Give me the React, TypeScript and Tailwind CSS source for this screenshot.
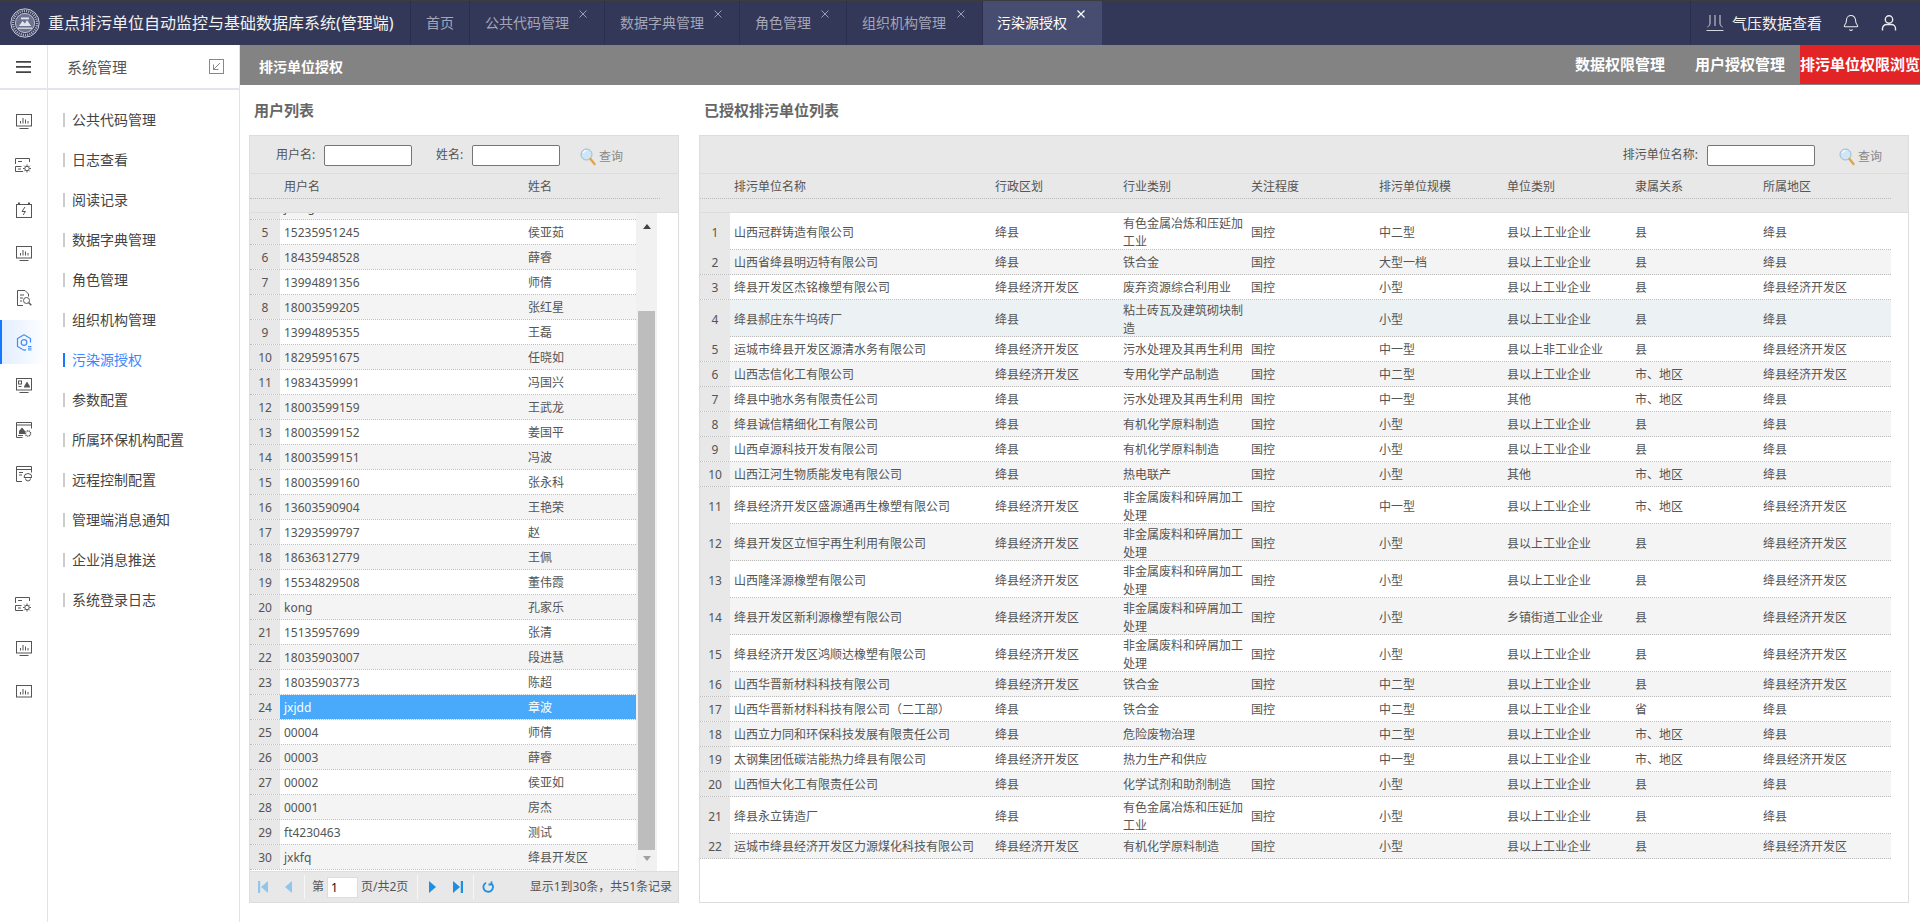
import { Bell } from 'lucide-react'

const FONT = "font-['Noto_Sans','Noto_Sans_CJK_SC',sans-serif]"

const TABS = [
  { label: '首页', width: 'w-[59px]', closable: false, active: false },
  { label: '公共代码管理', width: 'w-[135px]', closable: true, active: false },
  { label: '数据字典管理', width: 'w-[135px]', closable: true, active: false },
  { label: '角色管理', width: 'w-[107px]', closable: true, active: false },
  { label: '组织机构管理', width: 'w-[136px]', closable: true, active: false },
  { label: '污染源授权', width: 'w-[119px]', closable: true, active: true },
]

const MENU = [
  '公共代码管理',
  '日志查看',
  '阅读记录',
  '数据字典管理',
  '角色管理',
  '组织机构管理',
  '污染源授权',
  '参数配置',
  '所属环保机构配置',
  '远程控制配置',
  '管理端消息通知',
  '企业消息推送',
  '系统登录日志',
]

const USERS = [
  [4, 'jxang', ''],
  [5, '15235951245', '侯亚茹'],
  [6, '18435948528', '薛睿'],
  [7, '13994891356', '师倩'],
  [8, '18003599205', '张红星'],
  [9, '13994895355', '王磊'],
  [10, '18295951675', '任晓如'],
  [11, '19834359991', '冯国兴'],
  [12, '18003599159', '王武龙'],
  [13, '18003599152', '姜国平'],
  [14, '18003599151', '冯波'],
  [15, '18003599160', '张永科'],
  [16, '13603590904', '王艳荣'],
  [17, '13293599797', '赵'],
  [18, '18636312779', '王佩'],
  [19, '15534829508', '董伟霞'],
  [20, 'kong', '孔家乐'],
  [21, '15135957699', '张清'],
  [22, '18035903007', '段进慧'],
  [23, '18035903773', '陈超'],
  [24, 'jxjdd', '章波'],
  [25, '00004', '师倩'],
  [26, '00003', '薛睿'],
  [27, '00002', '侯亚如'],
  [28, '00001', '房杰'],
  [29, 'ft4230463', '测试'],
  [30, 'jxkfq', '绛县开发区'],
] as const

const KF = '绛县经济开发区'
const GY = '县以上工业企业'
const YS = '有色金属冶炼和压延加工业'
const FL = '非金属废料和碎屑加工处理'
const SD = '市、地区'

const COMPANIES = [
  ['山西冠群铸造有限公司', '绛县', YS, '国控', '中二型', GY, '县', '绛县'],
  ['山西省绛县明迈特有限公司', '绛县', '铁合金', '国控', '大型一档', GY, '县', '绛县'],
  ['绛县开发区杰铭橡塑有限公司', KF, '废弃资源综合利用业', '国控', '小型', GY, '县', KF],
  ['绛县郝庄东牛坞砖厂', '绛县', '粘土砖瓦及建筑砌块制造', '', '小型', GY, '县', '绛县'],
  ['运城市绛县开发区源清水务有限公司', KF, '污水处理及其再生利用', '国控', '中一型', '县以上非工业企业', '县', KF],
  ['山西志信化工有限公司', KF, '专用化学产品制造', '国控', '中二型', GY, SD, KF],
  ['绛县中驰水务有限责任公司', '绛县', '污水处理及其再生利用', '国控', '中一型', '其他', SD, '绛县'],
  ['绛县诚信精细化工有限公司', '绛县', '有机化学原料制造', '国控', '小型', GY, '县', '绛县'],
  ['山西卓源科技开发有限公司', '绛县', '有机化学原料制造', '国控', '小型', GY, '县', '绛县'],
  ['山西江河生物质能发电有限公司', '绛县', '热电联产', '国控', '小型', '其他', SD, '绛县'],
  ['绛县经济开发区盛源通再生橡塑有限公司', KF, FL, '国控', '中一型', GY, SD, KF],
  ['绛县开发区立恒宇再生利用有限公司', KF, FL, '国控', '小型', GY, '县', KF],
  ['山西隆泽源橡塑有限公司', KF, FL, '国控', '小型', GY, '县', KF],
  ['绛县开发区新利源橡塑有限公司', KF, FL, '国控', '小型', '乡镇街道工业企业', '县', KF],
  ['绛县经济开发区鸿顺达橡塑有限公司', KF, FL, '国控', '小型', GY, '县', KF],
  ['山西华晋新材料科技有限公司', KF, '铁合金', '国控', '中二型', GY, '县', KF],
  ['山西华晋新材料科技有限公司\uFF08二工部\uFF09', '绛县', '铁合金', '国控', '中二型', GY, '省', '绛县'],
  ['山西立力同和环保科技发展有限责任公司', '绛县', '危险废物治理', '', '中二型', GY, SD, '绛县'],
  ['太钢集团低碳洁能热力绛县有限公司', KF, '热力生产和供应', '', '中一型', GY, SD, KF],
  ['山西恒大化工有限责任公司', '绛县', '化学试剂和助剂制造', '国控', '小型', GY, '县', '绛县'],
  ['绛县永立铸造厂', '绛县', YS, '国控', '小型', GY, '县', '绛县'],
  ['运城市绛县经济开发区力源煤化科技有限公司', KF, '有机化学原料制造', '国控', '小型', GY, '县', KF],
]

const COMPANY_HEADERS = ['排污单位名称', '行政区划', '行业类别', '关注程度', '排污单位规模', '单位类别', '隶属关系', '所属地区']

function Logo() {
  return (
    <svg width="30" height="30" viewBox="0 0 30 30" fill="none" className="shrink-0">
      <circle cx="15" cy="15" r="14.2" stroke="#c9ccd8" strokeWidth="1" />
      <circle cx="15" cy="15" r="12" stroke="#a9adc0" strokeWidth="2.4" strokeDasharray="1.2 1" />
      <circle cx="15" cy="15" r="9.6" fill="#6d7290" stroke="#dcdee6" strokeWidth="0.8" />
      <path d="M9 18l3.500-5 2.500 2.500 2-3.500 4 6z" fill="#e2e4ec" />
      <path d="M11 9.500h8v1.800h-8z" fill="#e6e7ee" />
      <path d="M8 19.500h14v1.500H8z" fill="#c9ccd8" />
    </svg>
  )
}

function CloseX({ active }: { active: boolean }) {
  return (
    <svg width="8" height="8" viewBox="0 0 8 8" fill="none" stroke={active ? '#ffffff' : '#9a9eb4'} strokeWidth={active ? 1.2 : 1}>
      <path d="M.5.5l7 7M7.5.5l-7 7" />
    </svg>
  )
}

function MonitorBars({ stand = true }: { stand?: boolean }) {
  return (
    <svg width="16" height="16" viewBox="0 0 16 16" fill="none" stroke="#555" strokeWidth="1">
      <rect x="0.5" y="0.5" width="15" height="11.5" />
      <path d="M4.500 9.500V7M7 9.500V4M9.500 9.500V5.500M12 9.500V7" />
      {stand && <path d="M3.500 14.500h9" />}
    </svg>
  )
}

function PanelGear() {
  return (
    <svg width="17" height="16" viewBox="0 0 17 16" fill="none" stroke="#555" strokeWidth="1">
      <path d="M8 13.500H.5v-5h6M.5 6V.5h14V4" />
      <path d="M3 3.500h4M3 11h3" />
      <circle cx="12" cy="10.500" r="2.200" />
      <path d="M12 6.500v1.600M12 12.900v1.600M8 10.500h1.600M14.400 10.500H16M9.200 7.700l1.100 1.100M13.700 12.200l1.100 1.100M9.200 13.300l1.100-1.100M13.700 8.800l1.100-1.100" />
    </svg>
  )
}

function BatteryBolt() {
  return (
    <svg width="16" height="16" viewBox="0 0 16 16" fill="none" stroke="#555" strokeWidth="1">
      <rect x="0.5" y="2.5" width="15" height="13" />
      <path d="M3 .5v2M13 .5v2" strokeWidth="2" />
      <path d="M9 5L6 9.500h3.500L7 13" />
    </svg>
  )
}

function DocSearch() {
  return (
    <svg width="16" height="16" viewBox="0 0 16 16" fill="none" stroke="#555" strokeWidth="1">
      <path d="M7 15.500H1.500V.5H9l3.500 3.500v2.500" />
      <path d="M4 5h4M4 8h3M4 11h2" />
      <circle cx="10.500" cy="10.500" r="3" />
      <path d="M12.800 12.800l2.500 2.500" strokeWidth="1.400" />
    </svg>
  )
}

function HexActive() {
  return (
    <svg width="16" height="17" viewBox="0 0 16 17" fill="none" stroke="#3b8cff" strokeWidth="1.200">
      <path d="M8 .8l6.500 3.700v4M10 15.900l-2 .3-6.500-3.700V4.500L8 .8" />
      <circle cx="8" cy="8.500" r="2.800" />
      <path d="M12 12.500h3.500M12 14.200h3.500M12 15.900h3.500" strokeWidth="1" />
    </svg>
  )
}

function MonitorHome() {
  return (
    <svg width="16" height="16" viewBox="0 0 16 16" fill="none" stroke="#555" strokeWidth="1">
      <rect x="0.5" y="0.5" width="15" height="11.5" />
      <rect x="2.5" y="3" width="3" height="3" />
      <path d="M2.500 8.500h3" />
      <path d="M8 8.500l3-5 3 5v1H8z" fill="#555" stroke="none" />
      <path d="M3.500 14.500h9" />
    </svg>
  )
}

function WindowHomeGear() {
  return (
    <svg width="16" height="16" viewBox="0 0 16 16" fill="none" stroke="#555" strokeWidth="1">
      <path d="M.5 15.500V.5h15v6" />
      <path d="M.5 3h15" />
      <path d="M3 9l3-3.500L9 9v3H3z" fill="#555" stroke="none" />
      <path d="M2 13.500h5M.5 15.500h6" />
      <circle cx="12" cy="11.500" r="2.600" strokeDasharray="1.200 .6" strokeWidth="1.400" />
    </svg>
  )
}

function WindowHat() {
  return (
    <svg width="16" height="16" viewBox="0 0 16 16" fill="none" stroke="#555" strokeWidth="1">
      <path d="M6 15.500H.5V.5h15v6" />
      <path d="M.5 3.500h15M3 6.500h4M3 9h3" />
      <path d="M8 11.500a4 4 0 018 0zM9.500 12.500a2.500 2.500 0 005 0" />
    </svg>
  )
}

const SIDE_ICONS = [
  <MonitorBars key="a" />,
  <PanelGear key="b" />,
  <BatteryBolt key="c" />,
  <MonitorBars key="d" />,
  <DocSearch key="e" />,
  <HexActive key="f" />,
  <MonitorHome key="g" />,
  <WindowHomeGear key="h" />,
  <WindowHat key="i" />,
]

function SearchButton() {
  return (
    <span className="flex items-center gap-[3px] pt-[3px] text-[12px] leading-[18px] text-[#888]">
      <svg width="16" height="18" viewBox="0 0 16 18" fill="none">
        <circle cx="6.500" cy="6.500" r="5.500" fill="#cfe6f7" stroke="#9ab8cf" strokeWidth="1" />
        <path d="M3.500 5a3 3 0 013-2.500" stroke="#ffffff" strokeWidth="1.200" />
        <path d="M10.500 11l4 5" stroke="#e0a54a" strokeWidth="2.400" strokeLinecap="round" />
      </svg>
      查询
    </span>
  )
}

function PagerIcon({ kind, color }: { kind: 'first' | 'prev' | 'next' | 'last'; color: string }) {
  return (
    <span className="flex w-[26px] justify-center">
      <svg width="10" height="12" viewBox="0 0 10 12" fill={color}>
        {kind === 'first' && <path d="M0 0h2.200v12H0zM10 0v12L3 6z" />}
        {kind === 'prev' && <path d="M8 0v12L1 6z" />}
        {kind === 'next' && <path d="M2 0v12l7-6z" />}
        {kind === 'last' && <path d="M0 0v12l7-6zM7.800 0H10v12H7.800z" />}
      </svg>
    </span>
  )
}

function Header() {
  return (
    <header className="flex h-[45px] shrink-0 border-t border-[#3c3c3c] bg-[#333858]">
      <div className="flex w-[410px] shrink-0 items-center pl-[10px]">
        <Logo />
        <h1 className="ml-[8px] text-[16px] leading-[24px] font-normal whitespace-nowrap text-[#f2f2f2]">
          重点排污单位自动监控与基础数据库系统(管理端)
        </h1>
      </div>
      <nav className="flex border-l border-[#2b2f4b]">
        {TABS.map((tab) => (
          <div
            key={tab.label}
            className={
              tab.active
                ? `relative flex ${tab.width} items-center bg-[#474d70] pl-[14px] text-[14px] leading-[20px] text-white`
                : `relative flex ${tab.width} items-center border-r border-[#2b2f4b] pl-[15px] text-[14px] leading-[20px] text-[#a3a6b8]`
            }
          >
            {tab.label}
            {tab.closable && (
              <span className="absolute top-[9px] right-[17px] flex">
                <CloseX active={tab.active} />
              </span>
            )}
          </div>
        ))}
      </nav>
      <div className="ml-auto flex w-[230px] items-center border-l border-[#2b2f4b] pl-[15px]">
        <svg width="18" height="18" viewBox="0 0 18 18" fill="none" stroke="#d5d7e0" strokeWidth="1">
          <path d="M4 1v8c0 2-1 3-2.500 4M9 1v11M14 1v8c0 2 1 3 2.500 4M.5 16.500h17" />
        </svg>
        <span className="ml-[8px] text-[15px] leading-[20px] text-[#f2f2f2]">气压数据查看</span>
        <Bell size={18} strokeWidth={1.4} className="ml-[20px] text-[#eceded]" />
        <svg width="16" height="16" viewBox="0 0 16 16" fill="none" stroke="#eceded" strokeWidth="1.400" className="ml-[21px]">
          <circle cx="8" cy="4.500" r="3.700" />
          <path d="M1.500 15.500v-2a4 4 0 014-4h5a4 4 0 014 4v2" />
        </svg>
      </div>
    </header>
  )
}

function Sidebar() {
  return (
    <aside className="flex w-[240px] shrink-0 flex-col border-r border-[#e2e2ea]">
      <div className="flex h-[45px] shrink-0 border-b-2 border-[#e4e4ee]">
        <div className="flex w-[48px] items-center justify-center border-r border-[#e2e2ea]">
          <svg width="15" height="12" viewBox="0 0 15 12" fill="#444">
            <path d="M0 0h15v1.700H0zM0 5.100h15v1.700H0zM0 10.200h15v1.700H0z" />
          </svg>
        </div>
        <div className="flex flex-1 items-center justify-between pr-[15px] pl-[19px]">
          <span className="text-[15px] leading-[20px] text-[#555]">系统管理</span>
          <svg width="15" height="15" viewBox="0 0 15 15" fill="none" stroke="#888" strokeWidth="1">
            <rect x="0.5" y="0.5" width="14" height="14" />
            <path d="M11 4l-6.500 6.500M4.500 5.500v5h5" />
          </svg>
        </div>
      </div>
      <div className="flex flex-1">
        <div className="flex w-[48px] flex-col border-r border-[#e2e2ea] pt-[10px]">
          {SIDE_ICONS.map((icon, i) => (
            <div
              key={i}
              className={
                i === 5
                  ? 'flex h-[44px] items-center justify-center border-l-2 border-[#1677ff] bg-gradient-to-r from-[#e3eeff] to-white pr-[2px]'
                  : 'flex h-[44px] items-center justify-center'
              }
            >
              {icon}
            </div>
          ))}
          <div className="mt-[87px] flex h-[44px] items-center justify-center">
            <PanelGear />
          </div>
          <div className="flex h-[44px] items-center justify-center">
            <MonitorBars />
          </div>
          <div className="flex h-[44px] items-center justify-center">
            <MonitorBars stand={false} />
          </div>
        </div>
        <ul className="flex-1 pt-[10px]">
          {MENU.map((item) => (
            <li key={item} className="flex h-[40px] items-center pl-[15px]">
              <span className={item === '污染源授权' ? 'h-[14px] w-[2px] bg-[#1677ff]' : 'h-[14px] w-[2px] bg-[#ccc]'} />
              <span className={item === '污染源授权' ? 'ml-[7px] text-[14px] leading-[20px] text-[#3b86ff]' : 'ml-[7px] text-[14px] leading-[20px] text-[#444]'}>
                {item}
              </span>
            </li>
          ))}
        </ul>
      </div>
    </aside>
  )
}

function TextInput({ width }: { width: string }) {
  return <input className={`${width} h-[21px] rounded-[2px] border border-[#767676] bg-white`} />
}

function UserPanel() {
  return (
    <section className="flex w-[430px] shrink-0 flex-col">
      <h2 className="flex h-[50px] items-center pl-[5px] text-[15px] font-bold text-[#666]">用户列表</h2>
      <div className="flex min-h-0 flex-1 flex-col border border-[#ddd] bg-white">
        <div className="flex h-[38px] shrink-0 items-center border-b border-[#ddd] bg-[#e8e8e8] pt-[2px] text-[12px] text-[#555]">
          <span className="ml-[26px] w-[48px] pb-[2px]">用户名:</span>
          <TextInput width="w-[88px]" />
          <span className="ml-[24px] w-[36px] pb-[2px]">姓名:</span>
          <TextInput width="w-[88px]" />
          <span className="ml-[20px]">
            <SearchButton />
          </span>
        </div>
        <div className="h-[39px] shrink-0 border-b border-[#ddd] bg-[#e8e8e8] text-[12px] text-[#555]">
          <div className="flex h-[25px] w-[410px] items-center border-b border-dotted border-[#bbb] pt-[2px]">
            <span className="ml-[34px] w-[244px]">用户名</span>
            <span>姓名</span>
          </div>
        </div>
        <div className="flex min-h-0 flex-1 overflow-hidden">
          <div className="-mt-[18px] w-[386px] shrink-0">
            {USERS.map(([no, account, name]) => (
              <div key={no} className="flex h-[25px] items-center border-b border-dotted border-[#bbb] text-[12px] leading-[18px] text-[#555]">
                <span className="flex h-full w-[30px] shrink-0 items-center justify-center bg-[#e8e8e8] pt-[2px]">{no}</span>
                <div
                  className={
                    no === 24
                      ? 'flex h-full flex-1 items-center bg-[#49a9fb] pt-[2px] text-white'
                      : no % 2 === 0
                        ? 'flex h-full flex-1 items-center bg-[#f4f4f4] pt-[2px]'
                        : 'flex h-full flex-1 items-center bg-white pt-[2px]'
                  }
                >
                  <span className="w-[244px] pl-[4px]">{account}</span>
                  <span className="pl-[4px]">{name}</span>
                </div>
              </div>
            ))}
          </div>
          <div className="flex w-[21px] shrink-0 flex-col items-center bg-[#f1f1f1]">
            <svg width="8" height="5" viewBox="0 0 8 5" fill="#444" className="mt-[11px]">
              <path d="M4 0l4 5H0z" />
            </svg>
            <div className="mt-[82px] h-[539px] w-[17px] bg-[#bdbdbd]" />
            <svg width="8" height="5" viewBox="0 0 8 5" fill="#a0a0a0" className="mt-[6px]">
              <path d="M0 0h8L4 5z" />
            </svg>
          </div>
        </div>
        <div className="flex h-[31px] shrink-0 items-center border-t border-[#ddd] bg-[#e8e8e8] text-[12px] leading-[18px] text-[#555]">
          <PagerIcon kind="first" color="#8fc6ec" />
          <PagerIcon kind="prev" color="#8fc6ec" />
          <span className="ml-[2px] h-[24px] w-px bg-[#f7f7f7]" />
          <span className="ml-[7px] w-[12px]">第</span>
          <input defaultValue="1" className="ml-[3px] h-[21px] w-[31px] border border-[#ddd] bg-white pl-[3px] text-[12px] text-[#111]" />
          <span className="ml-[3px] w-[56px]">页/共2页</span>
          <span className="h-[24px] w-px bg-[#f7f7f7]" />
          <span className="ml-px flex">
            <PagerIcon kind="next" color="#1a8fe3" />
            <PagerIcon kind="last" color="#1a8fe3" />
          </span>
          <span className="ml-[2px] h-[24px] w-px bg-[#f7f7f7]" />
          <span className="ml-px flex w-[26px] justify-center">
            <svg width="12" height="12" viewBox="0 0 12 12" fill="none" stroke="#1a8fe3" strokeWidth="1.800">
              <path d="M4 1.700a4.800 4.800 0 106 1.300M9.500 .5v3h-3" />
            </svg>
          </span>
          <span className="mr-[6px] ml-auto">{'显示1到30条\uFF0C共51条记录'}</span>
        </div>
      </div>
    </section>
  )
}

function CompanyPanel() {
  const gridCols = 'grid grid-cols-[30px_262px_repeat(6,128px)_131px]'
  return (
    <section className="ml-[20px] flex w-[1210px] shrink-0 flex-col">
      <h2 className="flex h-[50px] items-center pl-[5px] text-[15px] font-bold text-[#666]">已授权排污单位列表</h2>
      <div className="flex min-h-0 flex-1 flex-col border border-[#ddd] bg-white">
        <div className="flex h-[38px] shrink-0 items-center justify-end border-b border-[#ddd] bg-[#e8e8e8] pt-[2px] pr-[26px] text-[12px] text-[#555]">
          <span className="pb-[2px]">排污单位名称:</span>
          <span className="ml-[9px] flex">
            <TextInput width="w-[108px]" />
          </span>
          <span className="ml-[24px]">
            <SearchButton />
          </span>
        </div>
        <div className="h-[39px] shrink-0 border-b border-[#ddd] bg-[#e8e8e8] text-[12px] text-[#555]">
          <div className={`${gridCols} h-[25px] w-[1191px] items-center border-b border-dotted border-[#bbb] pt-[2px]`}>
            <span />
            {COMPANY_HEADERS.map((title, i) => (
              <span key={title} className={i === 0 ? 'pl-[4px]' : 'pl-[3px]'}>
                {title}
              </span>
            ))}
          </div>
        </div>
        <div className="min-h-0 flex-1 overflow-hidden">
          {COMPANIES.map((row, index) => {
            const no = index + 1
            const tall = row[2].length > 10
            const bg = no === 4 ? 'bg-[#ecf1f4]' : no % 2 === 0 ? 'bg-[#f4f4f4]' : 'bg-white'
            return (
              <div
                key={no}
                className={`${gridCols} w-[1191px] items-center border-b border-dotted border-[#bbb] text-[12px] leading-[18px] text-[#555] ${tall ? 'h-[37px]' : 'h-[25px]'} ${bg}`}
              >
                <span className="flex h-full items-center justify-center bg-[#e8e8e8] pt-[2px]">{no}</span>
                {row.map((cell, i) => (
                  <span key={i} className={i === 0 ? 'pt-[2px] pl-[4px]' : 'pt-[2px] pl-[3px]'}>
                    {cell}
                  </span>
                ))}
              </div>
            )
          })}
        </div>
      </div>
    </section>
  )
}

export default function App() {
  return (
    <div className={`flex h-[922px] w-full flex-col overflow-hidden bg-white ${FONT}`}>
      <Header />
      <div className="flex min-h-0 flex-1">
        <Sidebar />
        <main className="flex min-w-0 flex-1 flex-col">
          <div className="flex h-[40px] shrink-0 bg-[#838383] text-white">
            <span className="flex items-center pt-[2px] pl-[19px] text-[14px] font-bold">排污单位授权</span>
            <div className="ml-auto flex text-[15px] leading-[20px] font-bold">
              <span className="flex w-[120px] items-center justify-center pb-[2px]">数据权限管理</span>
              <span className="flex w-[120px] items-center justify-center pb-[2px]">用户授权管理</span>
              <span className="flex h-[39px] w-[120px] items-center justify-center bg-[#e22426] pb-[1px] whitespace-nowrap">排污单位权限浏览</span>
            </div>
          </div>
          <div className="flex min-h-0 flex-1 pb-[19px] pl-[9px]">
            <UserPanel />
            <CompanyPanel />
          </div>
        </main>
      </div>
    </div>
  )
}
